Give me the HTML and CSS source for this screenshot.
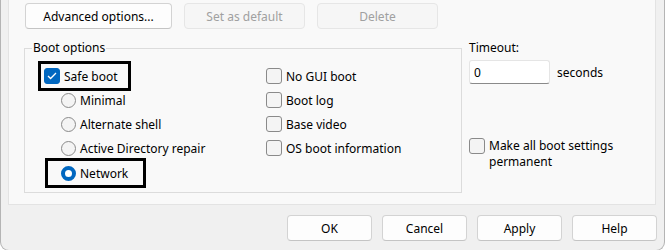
FILE: index.html
```html
<!DOCTYPE html>
<html lang="en">
<head>
  <meta charset="UTF-8" />
  <title>Boot options</title>
  <link rel="stylesheet" href="styles.css">
</head>
<body>
  <div class="window">
    <div class="panel">
      <div class="top-buttons">
        <button class="btn btn-wide">Advanced options...</button>
        <button class="btn" disabled>Set as default</button>
        <button class="btn" disabled>Delete</button>
      </div>

      <div class="main">
        <fieldset class="group">
          <legend>Boot options</legend>
          <div class="group-grid">
            <div class="col">
              <label class="opt mark mark-safe">
                <span class="check checked">
                  <svg width="10" height="8" viewBox="0 0 10 8"><polyline points="1,4 3.6,6.5 9,1" fill="none" stroke="#fff" stroke-width="1.3"/></svg>
                </span>
                Safe boot
              </label>
              <label class="opt sub"><span class="radio"></span>Minimal</label>
              <label class="opt sub"><span class="radio"></span>Alternate shell</label>
              <label class="opt sub"><span class="radio"></span>Active Directory repair</label>
              <label class="opt mark mark-net"><span class="radio selected"></span>Network</label>
            </div>
            <div class="col">
              <label class="opt"><span class="check"></span>No GUI boot</label>
              <label class="opt"><span class="check"></span>Boot log</label>
              <label class="opt"><span class="check"></span>Base video</label>
              <label class="opt"><span class="check"></span>OS boot information</label>
            </div>
          </div>
        </fieldset>

        <div class="side">
          <div class="side-label">Timeout:</div>
          <div class="timeout">
            <input type="text" class="field" value="0">
            <span>seconds</span>
          </div>
          <label class="opt opt-multi"><span class="check"></span>Make all boot settings<br>permanent</label>
        </div>
      </div>
    </div>

    <div class="dialog-buttons">
      <button class="btn btn-dialog">OK</button>
      <button class="btn btn-dialog">Cancel</button>
      <button class="btn btn-dialog">Apply</button>
      <button class="btn btn-dialog">Help</button>
    </div>
  </div>
</body>
</html>
```

FILE: styles.css
```css
:root {
  --window-bg: #f0f0f0;
  --panel-bg: #f9f9f9;
  --panel-border: #e3e3e3;
  --group-border: #dcdcdc;
  --text: #000;
  --muted: #a0a0a0;
  --accent: #0067c0;
}

html, body {
  margin: 0;
  padding: 0;
  overflow: hidden;
  background: #fff;
}

body {
  font-family: 'Noto Sans', 'Liberation Sans', sans-serif;
  font-size: 12px;
  color: var(--text);
}

.window {
  width: 665px;
  height: 251px;
  box-sizing: border-box;
  background: var(--window-bg);
  border: 1px solid #b4b4b4;
  border-top: none;
  border-radius: 0 0 9px 9px;
}

.panel {
  margin: 0 8px 0 7px;
  height: 205px;
  box-sizing: border-box;
  background: var(--panel-bg);
  border: 1px solid var(--panel-border);
  border-top: none;
  padding: 3px 0 0 16px;
}

.top-buttons {
  display: flex;
  gap: 12px;
}

.btn {
  height: 26px;
  width: 121px;
  box-sizing: border-box;
  background: #fdfdfd;
  border: 1px solid #d3d3d3;
  border-bottom-color: #c4c4c4;
  border-radius: 4px;
  font-family: inherit;
  font-size: 12px;
  color: var(--text);
  padding: 0;
}

.btn-wide {
  width: 147px;
}

.btn:disabled {
  background: #f6f6f6;
  border-color: #e6e6e6;
  color: var(--muted);
}

.main {
  display: flex;
  gap: 7px;
  margin-top: 11px;
  margin-left: -1px;
}

.group {
  width: 438px;
  height: 153px;
  box-sizing: border-box;
  margin: 0;
  padding: 8px 0 0 0;
  border: 1px solid var(--group-border);
  border-radius: 0;
}

.group legend {
  margin-left: 7px;
  padding: 0 1px;
  line-height: 16px;
}

.group-grid {
  display: grid;
  grid-template-columns: 241px 1fr;
}

.opt {
  display: flex;
  align-items: center;
  gap: 4px;
  height: 24px;
  box-sizing: border-box;
  white-space: nowrap;
}

.sub {
  margin-left: 36px;
}

.mark {
  outline: 3px solid #000;
}

.mark-safe {
  margin-left: 16px;
  width: 87px;
  padding-left: 3px;
}

.mark-net {
  margin-left: 23px;
  width: 95px;
  padding-left: 13px;
  margin-top: 1px;
}

.check {
  width: 16px;
  height: 16px;
  box-sizing: border-box;
  border: 1px solid #8a8a8a;
  border-radius: 3px;
  background: #f4f4f4;
  display: flex;
  align-items: center;
  justify-content: center;
  flex: none;
}

.check.checked {
  background: var(--accent);
  border-color: var(--accent);
}

.radio {
  width: 15px;
  height: 15px;
  box-sizing: border-box;
  border: 1px solid #8a8a8a;
  border-radius: 50%;
  background: #f4f4f4;
  flex: none;
}

.radio.selected {
  border: 4.5px solid var(--accent);
  background: #fff;
}

.side {
  display: flex;
  flex-direction: column;
}

.side-label {
  line-height: 16px;
}

.timeout {
  display: flex;
  align-items: center;
  gap: 7px;
  margin-top: 4px;
}

.field {
  width: 81px;
  height: 24px;
  box-sizing: border-box;
  border: 1px solid #e5e5e5;
  border-bottom-color: #8a8a8a;
  border-radius: 3px;
  background: #fff;
  font-family: inherit;
  font-size: 12px;
  padding: 0 4px;
  color: var(--text);
}

.opt-multi {
  align-items: flex-start;
  height: auto;
  margin-top: 54px;
  line-height: 16px;
  white-space: normal;
}

.dialog-buttons {
  display: flex;
  justify-content: flex-end;
  gap: 10px;
  margin: 10px 7px 0 0;
}

.btn-dialog {
  width: 85px;
}
```
